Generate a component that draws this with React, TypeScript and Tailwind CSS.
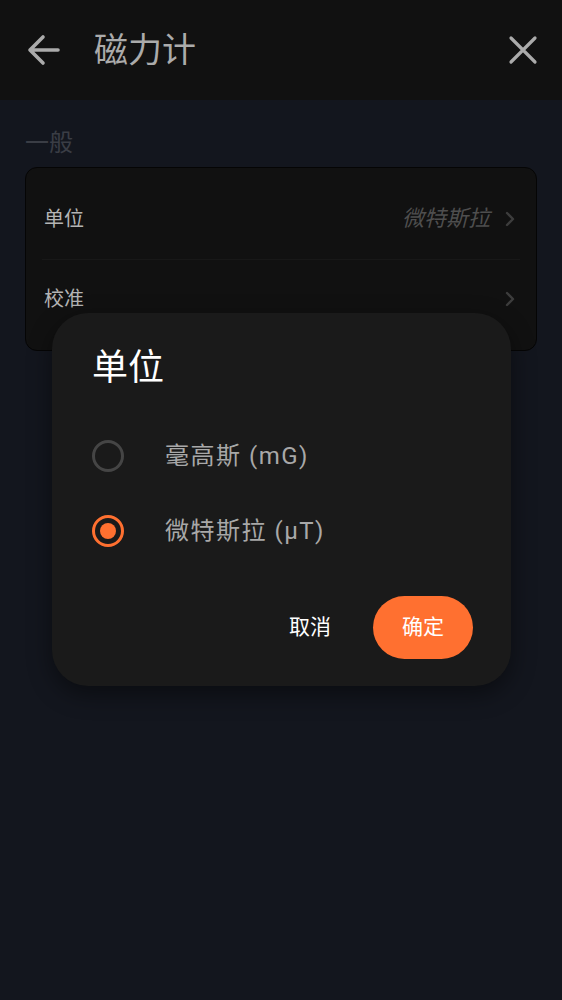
import React from "react";

const font = { fontFamily: 'Roboto, "Noto Sans CJK SC", sans-serif' };

function Chevron() {
  return (
    <svg width="12" height="18" viewBox="0 0 12 18" fill="none">
      <path d="M3 3 L9 9 L3 15" stroke="#3d3d3d" strokeWidth="2.4" strokeLinecap="round" strokeLinejoin="round" />
    </svg>
  );
}

export default function App() {
  return (
    <div className="relative w-[562px] h-[1000px] bg-[#13161e] overflow-hidden" style={font}>
      <header className="h-[100px] bg-[#111111] flex items-center px-[26px]">
        <svg width="36" height="36" viewBox="0 0 36 36" fill="none">
          <path d="M32 18 H4 M17 5 L4 18 L17 31" stroke="#ababab" strokeWidth="3.6" strokeLinecap="round" strokeLinejoin="round" />
        </svg>
        <h1 className="ml-[32px] text-[34px] leading-none text-[#ababab] font-normal">磁力计</h1>
        <div className="flex-1" />
        <svg width="30" height="30" viewBox="0 0 30 30" fill="none" className="mr-[-2px]">
          <path d="M3 3 L27 27 M27 3 L3 27" stroke="#ababab" strokeWidth="3.2" strokeLinecap="round" />
        </svg>
      </header>

      <div className="px-[25px]">
        <div className="pt-[29px] pb-[10px] text-[24px] leading-[28px] text-[#3a3d45]">一般</div>
        <div className="rounded-[12px] bg-[#111111] border border-[#050505]">
          <div className="h-[91px] flex items-center pl-[18px] pr-[20px] pt-[10px]">
            <span className="text-[20px] text-[#b4b4b4]">单位</span>
            <div className="flex-1" />
            <span className="text-[22px] italic text-[#4e4e4e] mr-[14px]">微特斯拉</span>
            <Chevron />
          </div>
          <div className="mx-[16px] h-px bg-[#181818]" />
          <div className="h-[90px] flex items-center pl-[18px] pr-[20px] pb-[12px]">
            <span className="text-[20px] text-[#b4b4b4]">校准</span>
            <div className="flex-1" />
            <Chevron />
          </div>
        </div>
      </div>

      <div className="absolute left-[52px] top-[313px] w-[459px] h-[373px] rounded-[36px] bg-[#1a1a1a] shadow-[0_8px_24px_rgba(0,0,0,0.45)] px-[40px] pt-[30px]">
        <div className="text-[36px] leading-[50px] text-white">单位</div>
        <div className="mt-[45px] flex items-center h-[36px]">
          <div className="w-[32px] h-[32px] rounded-full border-[3px] border-[#454545]" />
          <span className="ml-[41px] text-[24px] tracking-[1.5px] text-[#a8a8a8]">毫高斯 (mG)</span>
        </div>
        <div className="mt-[39px] flex items-center h-[36px]">
          <div className="w-[32px] h-[32px] rounded-full border-[3px] border-[#ff7030] flex items-center justify-center">
            <div className="w-[16px] h-[16px] rounded-full bg-[#ff7030]" />
          </div>
          <span className="ml-[41px] text-[24px] tracking-[1.5px] text-[#a8a8a8]">微特斯拉 (μT)</span>
        </div>
        <div className="mt-[47px] flex items-center justify-end mr-[-2px]">
          <span className="text-[21px] text-white mr-[42px]">取消</span>
          <div className="w-[100px] h-[63px] rounded-full bg-[#ff7030] flex items-center justify-center text-[21px] text-white">确定</div>
        </div>
      </div>
    </div>
  );
}
